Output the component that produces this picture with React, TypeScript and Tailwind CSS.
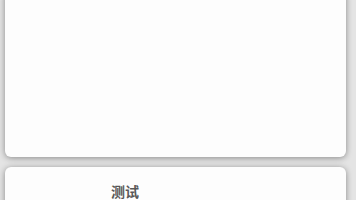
const Card = ({ children, className }: { children?: React.ReactNode; className?: string }) => {
    return (
        <div className={"bg-[#fdfdfd] rounded-[6px] shadow-[0_1px_6px_rgba(0,0,0,0.4)] " + (className ?? "")}>
            {children}
        </div>
    )
}

const App = () => {
    return (
        <div className="w-[356px] h-[200px] overflow-hidden bg-[#e4e4e4] pl-[5px] pr-[10px] flex flex-col gap-[10px]" style={{ fontFamily: '"Noto Sans CJK SC", "Noto Sans", sans-serif' }}>
            <Card className="h-[167px] -mt-[10px] shrink-0" />
            <Card className="h-[60px] shrink-0 pt-[14px] pl-[106px]">
                <span className="block text-[14px] leading-[20px] font-bold text-[#585858]">测试</span>
            </Card>
        </div>
    )
}

export default App
